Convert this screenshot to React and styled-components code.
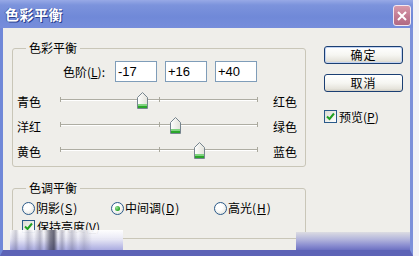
import React from "react";
import styled, { createGlobalStyle } from "styled-components";

const Global = createGlobalStyle`
  html, body { margin: 0; padding: 0; background: #f2f2f6; }
  body { font-family: "Noto Sans CJK SC", "Noto Sans", sans-serif; font-size: 12px; color: #000; }
  * { box-sizing: border-box; }
`;

const Frame = styled.div`
  position: relative;
  width: 413px;
  height: 256px;
  display: flex;
  flex-direction: column;
  overflow: hidden;
`;

const TitleBar = styled.div`
  height: 28px;
  flex: none;
  display: flex;
  align-items: center;
  justify-content: space-between;
  padding: 0 2px 0 5px;
  background: linear-gradient(to bottom, #97a9e6 0%, #7c93dc 18%, #7089d8 60%, #768ddb 100%);
`;

const Title = styled.div`
  color: #fff;
  font-size: 14px;
  font-weight: bold;
  line-height: 16px;
  letter-spacing: 0.5px;
  text-shadow: 1px 1px 0 #2a3f8f, -1px 0 0 #4a5fb0;
`;

const CloseButton = styled.div`
  width: 18px;
  height: 21px;
  margin-top: 3px;
  border: 1px solid #f4e8f0;
  border-radius: 3px;
  background: linear-gradient(to bottom, #d89aaa, #c07890 60%, #b06a84);
  display: flex;
  align-items: center;
  justify-content: center;
`;

const Client = styled.div`
  flex: 1;
  display: flex;
  gap: 18px;
  padding: 13px 0 0 9px;
  background: #efeeea;
  border-left: 3px solid #7088d8;
  border-right: 3px solid #7c90da;
  border-bottom: 6px solid #5d63b6;
`;

const LeftCol = styled.div`
  width: 294px;
  display: flex;
  flex-direction: column;
`;

const Group = styled.fieldset`
  margin: ${(p) => p.$mt || 0}px 0 0 0;
  padding: 0 0 ${(p) => p.$pb || 0}px 0;
  min-width: 0;
  border: 1px solid #c9c6b8;
  border-radius: 3px;
`;

const Legend = styled.legend`
  margin-left: 13px;
  padding: 0 3px;
  font-size: 12px;
  line-height: 14px;
`;

const LevelRow = styled.div`
  margin-top: 6px;
  height: 21px;
  display: flex;
  align-items: center;
  padding-left: 50px;
`;

const LevelLabel = styled.span`
  width: 52px;
  line-height: 14px;
`;

const NumBox = styled.div`
  width: 42px;
  height: 21px;
  margin-right: 8px;
  border: 1px solid #7f9db9;
  background: #fff;
  padding-left: 2px;
  line-height: 19px;
  font-size: 13px;
  font-family: "Liberation Sans", Arial, sans-serif;
`;

const U = styled.span`
  text-decoration: underline;
  text-underline-offset: 1px;
`;

const SliderList = styled.div`
  margin-top: 7px;
  display: flex;
  flex-direction: column;
`;

const SliderRow = styled.div`
  height: 25px;
  display: grid;
  grid-template-columns: 43px 198px auto;
  padding-left: 4px;
  align-items: center;
`;

const SideLabel = styled.span`
  line-height: 14px;
  padding-left: ${(p) => p.$pl || 0}px;
`;

const Track = styled.div`
  position: relative;
  align-self: start;
  margin-top: 3px;
  height: 16px;
`;

const Groove = styled.div`
  position: absolute;
  left: 0;
  right: 0;
  top: 7px;
  height: 2px;
  border-top: 1px solid #aeada3;
  border-bottom: 1px solid #ffffff;
`;

const Tick = styled.div`
  position: absolute;
  top: 5px;
  width: 1px;
  height: 5px;
  background: #a9a89c;
`;

const ThumbWrap = styled.div`
  position: absolute;
  top: 0;
  width: 11px;
  height: 17px;
  margin-left: -5px;
`;

const Bottom = styled.div`
  margin-top: 6px;
  display: grid;
  grid-template-columns: 89px 103px auto;
  padding-left: 9px;
  height: 14px;
  align-items: center;
`;

const CheckLine = styled.div`
  margin-top: ${(p) => p.$mt || 0}px;
  padding-left: ${(p) => p.$pl || 0}px;
  display: flex;
  align-items: center;
  height: 14px;
`;

const Option = styled.div`
  display: flex;
  align-items: center;
  gap: 1px;
  line-height: 14px;
  white-space: nowrap;
`;

const Radio = styled.span`
  width: 13px;
  height: 13px;
  border-radius: 50%;
  border: 1px solid #2a5a8a;
  background: radial-gradient(circle at 40% 35%, #ffffff 30%, #dcdcd4 100%);
  display: flex;
  align-items: center;
  justify-content: center;
  flex: none;
`;

const Dot = styled.span`
  width: 5px;
  height: 5px;
  border-radius: 50%;
  background: radial-gradient(circle at 35% 35%, #9be39b, #21a121 70%);
`;

const Check = styled.span`
  width: 13px;
  height: 13px;
  border: 1px solid #2a5a8a;
  background: linear-gradient(135deg, #dcdcd4, #ffffff);
  display: flex;
  align-items: center;
  justify-content: center;
  flex: none;
  margin-right: 2px;
`;

const RightCol = styled.div`
  width: 79px;
  padding-top: 5px;
  display: flex;
  flex-direction: column;
`;

const Button = styled.div`
  height: 18px;
  margin-bottom: ${(p) => p.$mb || 0}px;
  border: 1px solid #1b3f73;
  border-radius: 3px;
  background: linear-gradient(to bottom, #ffffff 0%, #f6f6f2 50%, #e6e4dc 85%, #d2cec4 100%);
  display: flex;
  align-items: center;
  justify-content: center;
  line-height: 14px;
  letter-spacing: 1px;
  box-shadow: ${(p) => (p.$default ? "inset 0 0 0 1px #c2d3f2" : "none")};
`;

const Smear = styled.div`
  position: absolute;
  pointer-events: none;
`;

const LeftSmear = styled(Smear)`
  left: 10px;
  top: 230px;
  width: 113px;
  height: 20px;
  background:
    linear-gradient(to right, transparent 0px, rgba(60,60,90,0.25) 6px, transparent 9px, transparent 14px,
      rgba(60,60,90,0.22) 18px, transparent 24px, rgba(60,60,90,0.3) 30px, transparent 34px,
      rgba(40,40,60,0.55) 40px, rgba(40,40,60,0.7) 44px, transparent 48px, rgba(60,60,90,0.3) 52px, transparent 56px,
      rgba(60,60,90,0.25) 62px, transparent 68px, rgba(60,60,90,0.18) 74px, transparent 82px),
    linear-gradient(to bottom, rgba(255,255,255,0.95) 0%, rgba(232,232,246,0.95) 45%, rgba(166,168,224,0.95) 100%);
`;

const RightSmear = styled(Smear)`
  left: 296px;
  top: 232px;
  width: 114px;
  height: 18px;
  background: linear-gradient(to bottom, #dcdce2 0%, #b4b6dc 40%, #8a8dd0 75%, #6d71c2 100%);
`;

function Thumb({ pct }) {
  return (
    <ThumbWrap style={{ left: `${pct}%` }}>
      <svg width="11" height="17" viewBox="0 0 11 17">
        <defs>
          <linearGradient id="tf" x1="0" y1="0" x2="1" y2="0">
            <stop offset="0" stopColor="#ffffff" />
            <stop offset="1" stopColor="#e2e2da" />
          </linearGradient>
        </defs>
        <path d="M0.5 16.5 V5.5 L5.5 0.5 L10.5 5.5 V16.5 Z" fill="url(#tf)" stroke="#76858f" />
        <rect x="1" y="12" width="9" height="2" fill="#7fd37f" />
        <rect x="1" y="14" width="9" height="2" fill="#2aa52a" />
      </svg>
    </ThumbWrap>
  );
}

function Slider({ left, right, value }) {
  const pct = ((value + 100) / 200) * 100;
  return (
    <SliderRow>
      <SideLabel>{left}</SideLabel>
      <Track>
        <Groove />
        <Tick style={{ left: 0 }} />
        <Tick style={{ left: "50%" }} />
        <Tick style={{ right: 0 }} />
        <Thumb pct={pct} />
      </Track>
      <SideLabel $pl={15}>{right}</SideLabel>
    </SliderRow>
  );
}

const CheckMark = () => (
  <svg width="9" height="9" viewBox="0 0 9 9">
    <path d="M1 4.5 L3.5 7 L8 1.5" fill="none" stroke="#21a121" strokeWidth="2" />
  </svg>
);

const sliders = [
  { left: "青色", right: "红色", value: -17 },
  { left: "洋红", right: "绿色", value: 16 },
  { left: "黄色", right: "蓝色", value: 40 },
];

export default function App() {
  return (
    <>
      <Global />
      <Frame>
        <TitleBar>
          <Title>色彩平衡</Title>
          <CloseButton>
            <svg width="10" height="10" viewBox="0 0 10 10">
              <path d="M1 1 L9 9 M9 1 L1 9" stroke="#fff" strokeWidth="2" />
            </svg>
          </CloseButton>
        </TitleBar>
        <Client>
          <LeftCol>
            <Group $pb={2}>
              <Legend>色彩平衡</Legend>
              <LevelRow>
                <LevelLabel>
                  色阶(<U>L</U>):
                </LevelLabel>
                <NumBox>-17</NumBox>
                <NumBox>+16</NumBox>
                <NumBox>+40</NumBox>
              </LevelRow>
              <SliderList>
                {sliders.map((s) => (
                  <Slider key={s.left} {...s} />
                ))}
              </SliderList>
            </Group>
            <Group $mt={14} $pb={5}>
              <Legend>色调平衡</Legend>
              <Bottom>
                <Option>
                  <Radio />
                  阴影(<U>S</U>)
                </Option>
                <Option>
                  <Radio>
                    <Dot />
                  </Radio>
                  中间调(<U>D</U>)
                </Option>
                <Option>
                  <Radio />
                  高光(<U>H</U>)
                </Option>
              </Bottom>
              <CheckLine $mt={4} $pl={9}>
                <Check>
                  <CheckMark />
                </Check>
                保持亮度(<U>V</U>)
              </CheckLine>
            </Group>
          </LeftCol>
          <RightCol>
            <Button $mb={10} $default>确定</Button>
            <Button $mb={17}>取消</Button>
            <CheckLine>
              <Check>
                <CheckMark />
              </Check>
              预览(<U>P</U>)
            </CheckLine>
          </RightCol>
        </Client>
        <LeftSmear />
        <RightSmear />
      </Frame>
    </>
  );
}
